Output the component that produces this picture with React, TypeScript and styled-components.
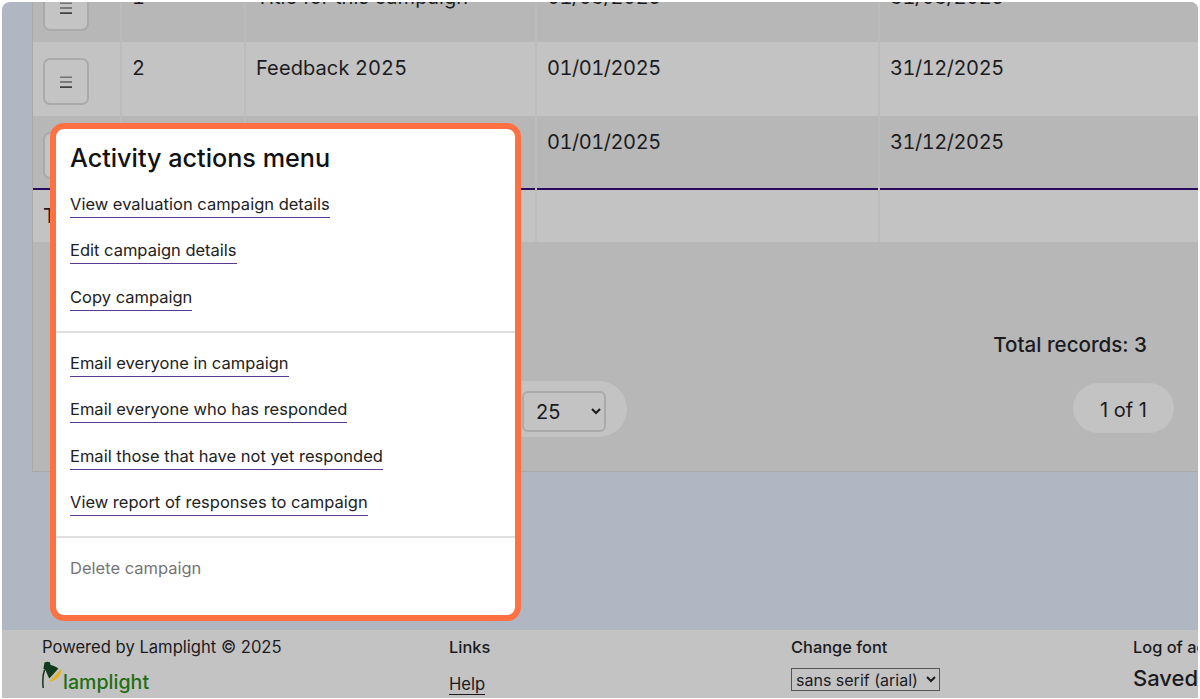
import React from "react";
import styled, { createGlobalStyle } from "styled-components";

const Global = createGlobalStyle`
  html, body { margin: 0; padding: 0; background: #fff; }
  body { font-family: Inter, "Liberation Sans", sans-serif; color: #1b1b1f; }
  * { box-sizing: border-box; }
`;

const Frame = styled.div`
  width: 1200px;
  height: 699px;
  padding: 2px 2px 1px 2px;
  overflow: hidden;
  background: #fff;
`;

const Screen = styled.div`
  position: relative;
  height: 100%;
  display: flex;
  flex-direction: column;
  overflow: hidden;
  border-radius: 8px 8px 0 0;
  background: #b0b6c2;
`;

const Main = styled.main`
  flex: 1;
  min-height: 0;
  padding-left: 30px;
`;

const Panel = styled.section`
  margin-top: -34px;
  height: 504px;
  background: #b7b7b7;
  border-left: 1px solid #a9a9a9;
  border-bottom: 1px solid #a6a8ab;
`;

const Table = styled.table`
  width: 100%;
  table-layout: fixed;
  border-collapse: collapse;
`;

const Row = styled.tr<{ $h: number; $light?: boolean; $total?: boolean }>`
  height: ${(p) => p.$h}px;
  background: ${(p) => (p.$light ? "#c3c3c3" : "#b7b7b7")};
  ${(p) => (p.$total ? "border-top: 2px solid #2a0a5e;" : "")}
`;

const Cell = styled.td<{ $top?: number; $date?: boolean }>`
  padding: ${(p) => p.$top ?? 11}px 10px 0 10px;
  vertical-align: top;
  font-size: 20px;
  line-height: 30px;
  letter-spacing: ${(p) => (p.$date ? "-0.45px" : "0.1px")};
  font-variant-numeric: tabular-nums;
  border-right: 2px solid #bcbcbc;
  &:last-child { border-right: 0; }
`;

const MenuButton = styled.button`
  display: flex;
  align-items: center;
  justify-content: center;
  width: 46px;
  height: 47px;
  margin: 7px 0 0 0;
  padding: 0;
  background: #c4c4c4;
  border: 2px solid #aaaaaa;
  border-radius: 7px;
`;

const Tools = styled.div`
  height: 228px;
`;

const TotalRecords = styled.div`
  display: flex;
  justify-content: flex-end;
  padding: 90px 51px 0 0;
  font-size: 20.6px;
  font-weight: 500;
  line-height: 26px;
`;

const Pager = styled.div`
  display: flex;
  justify-content: space-between;
  align-items: flex-start;
  padding: 23px 24px 0 189px;
`;

const SizePill = styled.div`
  display: flex;
  align-items: flex-start;
  justify-content: flex-end;
  width: 405px;
  height: 56px;
  padding: 10px 21px 0 0;
  background: #c3c3c3;
  border-radius: 28px;
`;

const SizeSelect = styled.select`
  width: 84px;
  height: 41px;
  padding: 0 6px 0 8px;
  font: 400 20px Inter, sans-serif;
  color: #1b1b1f;
  background: #c3c3c3;
  border: 2px solid #aaaaaa;
  border-radius: 6px;
`;

const PagePill = styled.div`
  display: flex;
  align-items: center;
  justify-content: center;
  width: 101px;
  height: 50px;
  margin-top: 2px;
  padding-top: 3px;
  font-size: 20px;
  background: #c3c3c3;
  border-radius: 25px;
`;

const Footer = styled.footer`
  display: grid;
  grid-template-columns: 407px 342px 342px 1fr;
  height: 68px;
  padding-left: 40px;
  background: #c3c3c3;
  overflow: hidden;
`;

const FooterCol = styled.div`
  display: flex;
  flex-direction: column;
  align-items: flex-start;
  padding-top: 7px;
  white-space: nowrap;
  font-size: 16.6px;
  line-height: 20px;
`;

const FooterHead = styled.div`
  font-weight: 500;
  font-size: 16.4px;
`;

const HelpLink = styled.a`
  margin-top: 18px;
  font-size: 16.6px;
  line-height: 19px;
  color: #1b1b1f;
  border-bottom: 1px solid #1b1b1f;
`;

const Logo = styled.div`
  display: flex;
  align-items: flex-end;
  margin-top: 4px;
`;

const LogoWord = styled.span`
  margin: 0 0 -3px 0;
  font-size: 19.6px;
  font-weight: 500;
  line-height: 20px;
  color: #1e6f12;
`;

const FontSelect = styled.select`
  width: 149px;
  height: 23px;
  margin-top: 11px;
  padding: 0;
  font: 400 16px Inter, sans-serif;
  color: #1b1b1f;
  background: #c3c3c3;
  border: 1px solid #555;
  border-radius: 0;
`;

const Saved = styled.div`
  margin-top: 8px;
  font-size: 22px;
  font-weight: 500;
  line-height: 26px;
`;

const Modal = styled.div`
  position: absolute;
  left: 48px;
  top: 121px;
  width: 471px;
  height: 498px;
  background: #fff;
  border: 6px solid #ff7043;
  border-radius: 14px;
  padding-top: 13px;
`;

const ModalTitle = styled.h2`
  margin: 0 0 0 14px;
  font-size: 25.2px;
  font-weight: 500;
  line-height: 32px;
  color: #111;
`;

const MenuGroup = styled.div<{ $top: number; $gap: number; $bottom: number }>`
  display: flex;
  flex-direction: column;
  align-items: flex-start;
  gap: ${(p) => p.$gap}px;
  padding: ${(p) => p.$top}px 14px ${(p) => p.$bottom}px;
`;

const MenuLink = styled.a`
  font-size: 16.5px;
  line-height: 23px;
  padding-bottom: 1px;
  color: #222;
  border-bottom: 1px solid #5b3a94;
`;

const Disabled = styled.span`
  font-size: 16.5px;
  line-height: 23px;
  color: #757575;
`;

const Divider = styled.hr`
  margin: 0;
  height: 2px;
  border: 0;
  background: #e0e0e0;
`;

const Burger = () => (
  <svg width="12" height="12" viewBox="0 0 12 12" aria-hidden="true">
    <rect x="0" y="0.5" width="12" height="1.4" fill="#6d6d6d" />
    <rect x="0" y="5.3" width="12" height="1.4" fill="#5a5a5a" />
    <rect x="0" y="10.4" width="12" height="1.4" fill="#222" />
  </svg>
);

const Lamp = () => (
  <svg width="21" height="28" viewBox="0 0 21 28" aria-hidden="true">
    <path d="M2.5 9 C0.6 14 0.6 21 1.2 27" fill="none" stroke="#15331a" strokeWidth="1.5" />
    <path d="M2.5 1.6 C4.5 0.6 7 0.6 8 1.6 L8.6 4 C11 4.4 14 5.6 16.4 7.4 L7.4 17.6 C5.8 14.6 4.6 11.8 3.6 9.4 L1.4 7.6 Z" fill="#133a1c" />
    <path d="M19.4 7.4 C20.2 10 18 14.6 14.6 17.6 C12 19.8 9 21.2 7.4 20.4 Z" fill="#e3b21c" />
  </svg>
);

const rows = [
  { n: "1", name: "Title for this campaign", from: "01/03/2025", to: "31/03/2025", h: 74, light: false, top: 14 },
  { n: "2", name: "Feedback 2025", from: "01/01/2025", to: "31/12/2025", h: 74, light: true, top: 11 },
  { n: "", name: "", from: "01/01/2025", to: "31/12/2025", h: 73, light: false, top: 11 },
];

export default function App() {
  return (
    <Frame>
      <Global />
      <Screen>
        <Main>
          <Panel>
            <Table>
              <colgroup>
                <col style={{ width: 88 }} />
                <col style={{ width: 124 }} />
                <col style={{ width: 291 }} />
                <col style={{ width: 343 }} />
                <col />
              </colgroup>
              <tbody>
                {rows.map((r) => (
                  <Row key={r.to + r.h} $h={r.h} $light={r.light}>
                    <Cell $top={9}><MenuButton aria-label="Actions"><Burger /></MenuButton></Cell>
                    <Cell $top={r.top}>{r.n}</Cell>
                    <Cell $top={r.top}>{r.name}</Cell>
                    <Cell $top={r.top} $date>{r.from}</Cell>
                    <Cell $top={r.top} $date>{r.to}</Cell>
                  </Row>
                ))}
                <Row $h={53} $light $total>
                  <Cell>Total</Cell>
                  <Cell />
                  <Cell />
                  <Cell />
                  <Cell />
                </Row>
              </tbody>
            </Table>
            <Tools>
              <TotalRecords>Total records: 3</TotalRecords>
              <Pager>
                <SizePill>
                  <SizeSelect defaultValue="25">
                    <option>10</option>
                    <option>25</option>
                    <option>50</option>
                  </SizeSelect>
                </SizePill>
                <PagePill>1 of 1</PagePill>
              </Pager>
            </Tools>
          </Panel>
        </Main>
        <Footer>
          <FooterCol>
            <div>Powered by Lamplight © 2025</div>
            <Logo><Lamp /><LogoWord>lamplight</LogoWord></Logo>
          </FooterCol>
          <FooterCol>
            <FooterHead>Links</FooterHead>
            <HelpLink>Help</HelpLink>
          </FooterCol>
          <FooterCol>
            <FooterHead>Change font</FooterHead>
            <FontSelect defaultValue="arial">
              <option value="arial">sans serif (arial)</option>
            </FontSelect>
          </FooterCol>
          <FooterCol>
            <FooterHead>Log of actions</FooterHead>
            <Saved>Saved</Saved>
          </FooterCol>
        </Footer>
        <Modal>
          <ModalTitle>Activity actions menu</ModalTitle>
          <MenuGroup $top={19} $gap={21.4} $bottom={20}>
            <MenuLink>View evaluation campaign details</MenuLink>
            <MenuLink>Edit campaign details</MenuLink>
            <MenuLink>Copy campaign</MenuLink>
          </MenuGroup>
          <Divider />
          <MenuGroup $top={19} $gap={21.4} $bottom={20}>
            <MenuLink>Email everyone in campaign</MenuLink>
            <MenuLink>Email everyone who has responded</MenuLink>
            <MenuLink>Email those that have not yet responded</MenuLink>
            <MenuLink>View report of responses to campaign</MenuLink>
          </MenuGroup>
          <Divider />
          <MenuGroup $top={19} $gap={21} $bottom={0}>
            <Disabled>Delete campaign</Disabled>
          </MenuGroup>
        </Modal>
      </Screen>
    </Frame>
  );
}
